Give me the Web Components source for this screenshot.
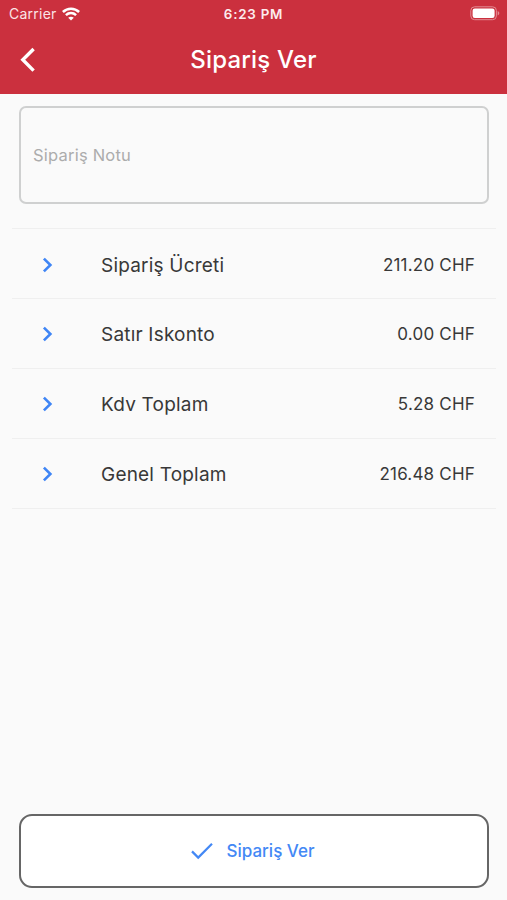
<!DOCTYPE html>
<html lang="tr">
<head>
<meta charset="utf-8">
<title>Sipariş Ver</title>
<style>
html, body {
  height: 100%;
  margin: 0;
}
body {
  background: #fafafa;
  font-family: Inter, "Liberation Sans", sans-serif;
}
</style>
</head>
<body>
<order-page>
  <status-bar slot="header" carrier="Carrier" time="6:23 PM"></status-bar>
  <nav-bar slot="header">Sipariş Ver</nav-bar>
  <note-field>Sipariş Notu</note-field>
  <total-list>
    <total-row>Sipariş Ücreti<span slot="value">211.20 CHF</span></total-row>
    <total-row>Satır Iskonto<span slot="value">0.00 CHF</span></total-row>
    <total-row>Kdv Toplam<span slot="value">5.28 CHF</span></total-row>
    <total-row>Genel Toplam<span slot="value">216.48 CHF</span></total-row>
  </total-list>
  <order-button slot="footer">Sipariş Ver</order-button>
</order-page>

<script>
function define(name, html, setup) {
  const template = document.createElement("template");
  template.innerHTML = html;
  window.customElements.define(
    name,
    class extends HTMLElement {
      constructor() {
        super();
        this.attachShadow({ mode: "open" });
        this.shadowRoot.appendChild(template.content.cloneNode(true));
      }
      connectedCallback() {
        if (setup) setup(this, this.shadowRoot);
      }
    }
  );
}

define("order-page", `
<style>
:host {
  display: flex;
  flex-direction: column;
  height: 100vh;
  overflow: hidden;
}
header {
  flex: none;
  height: 94px;
  background: #cb303e;
}
main {
  flex: 1;
  padding: 12px 11px 0 12px;
}
footer {
  padding: 0 18px 12px 19px;
}
</style>
<header><slot name="header"></slot></header>
<main><slot></slot></main>
<footer><slot name="footer"></slot></footer>
`);

define("status-bar", `
<style>
:host {
  display: grid;
  grid-template-columns: 1fr auto 1fr;
  align-items: center;
  height: 26px;
  padding: 0 7px 0 9px;
  color: #fff;
  line-height: 26px;
}
.left {
  display: flex;
  align-items: center;
  gap: 5px;
  font-size: 14px;
  letter-spacing: 0.25px;
  padding-top: 1px;
  color: #fbe4e6;
}
.time {
  font-size: 13.4px;
  font-weight: 600;
  letter-spacing: 0.75px;
  margin: 0 1px 0 -1px;
  color: #fdebed;
}
.battery {
  justify-self: end;
}
svg {
  display: block;
}
</style>
<div class="left">
  <span class="carrier"></span>
  <svg width="18" height="14" viewBox="0 0 18 14" fill="none" stroke="#fff" stroke-width="2.5">
    <path d="M.9 5C5.5.5 12.5.5 17.1 5"/>
    <path d="M3.9 8.2c3-2.8 7.2-2.8 10.2 0"/>
    <path d="M9 13.6 6.2 10.8c1.7-1.5 3.9-1.5 5.6 0z" fill="#fff" stroke="none"/>
  </svg>
</div>
<div class="time"></div>
<svg class="battery" width="30" height="15" viewBox="0 0 30 15">
  <rect x=".8" y=".8" width="25.6" height="12.9" rx="3.8" fill="none" stroke="#e28b93" stroke-width="1"/>
  <rect x="2.6" y="2.6" width="22" height="9.3" rx="2.2" fill="#fff"/>
  <path d="M27.7 5.1c2.1.8 2.1 3.5 0 4.3z" fill="#e28b93"/>
</svg>
`, (host, root) => {
  root.querySelector(".carrier").textContent = host.getAttribute("carrier");
  root.querySelector(".time").textContent = host.getAttribute("time");
});

define("nav-bar", `
<style>
:host {
  display: grid;
  grid-template-columns: 60px 1fr 60px;
  align-items: center;
  height: 68px;
  color: #fff;
}
svg {
  display: block;
  margin-left: 19px;
}
h1 {
  margin: 0;
  text-align: center;
  font-size: 24px;
  font-weight: 500;
  line-height: 68px;
  letter-spacing: 0.2px;
}
</style>
<svg width="18" height="26" viewBox="0 0 18 26" fill="none" stroke="#fff" stroke-width="3.4">
  <path d="M14.6 2 3.8 12.8 14.6 23.6"/>
</svg>
<h1><slot></slot></h1>
`);

define("note-field", `
<style>
:host {
  display: flex;
  align-items: center;
  box-sizing: border-box;
  height: 98px;
  margin: 0 7px;
  padding-left: 12px;
  border: 2px solid #cfd0d0;
  border-radius: 7px;
  color: #acacac;
  font-size: 16.5px;
  letter-spacing: 0.22px;
}
</style>
<slot></slot>
`);

define("total-list", `
<style>
:host {
  display: block;
  margin-top: 24px;
  border-top: 1px solid #efefef;
}
</style>
<slot></slot>
`);

define("total-row", `
<style>
:host {
  display: flex;
  align-items: center;
  box-sizing: border-box;
  height: 69.9px;
  padding: 1px 21px 0 30px;
  border-bottom: 1px solid #efefef;
  color: #383838;
}
:host(:first-child) {
  height: 70.3px;
  padding-top: 3px;
}
svg {
  flex: none;
  margin-right: 45px;
}
.label {
  flex: 1;
  padding-top: 1px;
  font-size: 19px;
  letter-spacing: 0.2px;
}
.value {
  font-size: 17px;
  letter-spacing: 0.2px;
}
</style>
<svg width="14" height="18" viewBox="0 0 14 18" fill="none" stroke="#3f85f5" stroke-width="2.6">
  <path d="M1.9 2.6 8.4 9l-6.5 6.4"/>
</svg>
<div class="label"><slot></slot></div>
<div class="value"><slot name="value"></slot></div>
`);

define("order-button", `
<style>
:host {
  display: block;
}
button {
  display: flex;
  align-items: center;
  justify-content: center;
  gap: 13px;
  box-sizing: border-box;
  width: 100%;
  height: 74px;
  padding: 0 2px 0 0;
  border: 2px solid #666;
  border-radius: 13px;
  background: #fff;
  color: #4388f5;
  font: 500 17px Inter, "Liberation Sans", sans-serif;
}
</style>
<button>
  <svg width="22" height="18" viewBox="0 0 22 18" fill="none" stroke="#4388f5" stroke-width="2.2">
    <path d="M1 9.4 7.2 15.6 21 1.8"/>
  </svg>
  <span><slot></slot></span>
</button>
`);
</script>
</body>
</html>
